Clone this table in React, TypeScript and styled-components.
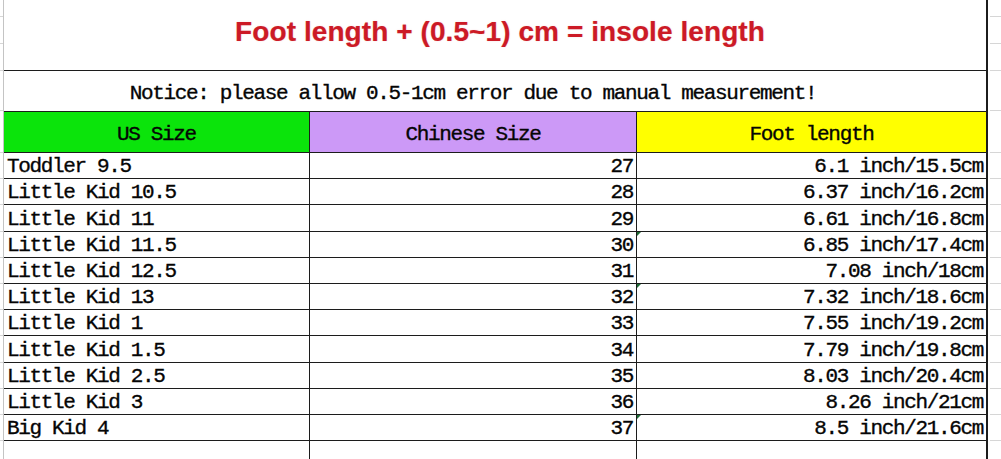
import React from "react";
import styled, { createGlobalStyle } from "styled-components";

const GlobalStyle = createGlobalStyle`
  html, body {
    margin: 0;
    padding: 0;
    background: #ffffff;
  }
  body {
    width: 1001px;
    height: 459px;
    overflow: hidden;
  }
`;

const ROW_H = 26.2;
const GUTTER_ROWS = [17, 27, 27, 40, 42, ...Array(11).fill(ROW_H), 30];

const rows = [
  { us: "Toddler 9.5", cn: "27", foot: "6.1 inch/15.5cm" },
  { us: "Little Kid 10.5", cn: "28", foot: "6.37 inch/16.2cm" },
  { us: "Little Kid 11", cn: "29", foot: "6.61 inch/16.8cm" },
  { us: "Little Kid 11.5", cn: "30", foot: "6.85 inch/17.4cm", mark: true },
  { us: "Little Kid 12.5", cn: "31", foot: "7.08 inch/18cm" },
  { us: "Little Kid 13", cn: "32", foot: "7.32 inch/18.6cm", mark: true },
  { us: "Little Kid 1", cn: "33", foot: "7.55 inch/19.2cm" },
  { us: "Little Kid 1.5", cn: "34", foot: "7.79 inch/19.8cm" },
  { us: "Little Kid 2.5", cn: "35", foot: "8.03 inch/20.4cm" },
  { us: "Little Kid 3", cn: "36", foot: "8.26 inch/21cm" },
  { us: "Big Kid 4", cn: "37", foot: "8.5 inch/21.6cm", mark: true },
];

const Sheet = styled.div`
  display: flex;
  width: 1001px;
  height: 459px;
  overflow: hidden;
  font-family: "Liberation Mono", "Courier New", monospace;
  font-size: 21px;
  letter-spacing: -1.35px;
  color: #050505;
  -webkit-text-stroke: 0.35px #050505;
`;

const Gutter = styled.div<{ $side: "left" | "right" }>`
  display: flex;
  flex-direction: column;
  width: ${(p) => (p.$side === "left" ? "3px" : "11px")};
  margin-left: ${(p) => (p.$side === "left" ? "0" : "2px")};
  border-right: ${(p) => (p.$side === "left" ? "1px solid #c4c4c4" : "none")};
  flex-shrink: 0;
`;

const GutterCell = styled.div<{ $h: number }>`
  height: ${(p) => p.$h}px;
  flex-shrink: 0;
  box-sizing: border-box;
  border-bottom: 1px solid #d6d6d6;
`;

const Table = styled.div`
  width: 984px;
  flex-shrink: 0;
  border-right: 2px solid #1c1c1c;
  box-sizing: border-box;
  display: flex;
  flex-direction: column;
  overflow: hidden;
`;

const Title = styled.div`
  height: 71px;
  flex-shrink: 0;
  box-sizing: border-box;
  border-bottom: 1px solid #1c1c1c;
  display: flex;
  align-items: center;
  justify-content: center;
  padding: 0 0 6px 10px;
  font-family: "Liberation Sans", Arial, sans-serif;
  font-weight: bold;
  font-size: 28px;
  letter-spacing: 0.08px;
  color: #cc1a26;
  -webkit-text-stroke: 0.2px #cc1a26;
  text-shadow: 0 0 2px rgba(204, 26, 38, 0.15);
`;

const Notice = styled.div`
  height: 41px;
  flex-shrink: 0;
  box-sizing: border-box;
  border-bottom: 1px solid #1c1c1c;
  display: flex;
  align-items: center;
  justify-content: center;
  padding: 5px 44px 0 0;
  white-space: pre;
`;

const Grid = styled.div`
  flex-shrink: 0;
  display: grid;
  grid-template-columns: 305px 327px 1fr;
  grid-template-rows: 41px repeat(11, ${ROW_H}px) 30px;
`;

const HeadCell = styled.div<{ $bg: string; $first?: boolean }>`
  box-sizing: border-box;
  background: ${(p) => p.$bg};
  border-left: ${(p) => (p.$first ? "none" : "1px solid #1c1c1c")};
  border-bottom: 1px solid #1c1c1c;
  display: flex;
  align-items: center;
  justify-content: center;
  padding-top: 4px;
  white-space: pre;
`;

const Cell = styled.div<{ $align: "left" | "right"; $first?: boolean }>`
  position: relative;
  box-sizing: border-box;
  border-left: ${(p) => (p.$first ? "none" : "1px solid #1c1c1c")};
  border-bottom: 1px solid #1c1c1c;
  display: flex;
  align-items: flex-end;
  justify-content: ${(p) => (p.$align === "left" ? "flex-start" : "flex-end")};
  padding: ${(p) => (p.$align === "left" ? "0 0 1px 3px" : "0 3px 1px 0")};
  line-height: 21px;
  white-space: pre;
`;

const EmptyCell = styled.div<{ $first?: boolean }>`
  border-left: ${(p) => (p.$first ? "none" : "1px solid #1c1c1c")};
`;

const ErrorMark = styled.span`
  position: absolute;
  top: 0;
  left: 0;
  width: 0;
  height: 0;
  border-top: 4px solid #1d6b34;
  border-right: 4px solid transparent;
`;

export default function App() {
  return (
    <>
      <GlobalStyle />
      <Sheet>
        <Gutter $side="left">
          {GUTTER_ROWS.map((h, i) => (
            <GutterCell key={i} $h={h} />
          ))}
        </Gutter>
        <Table>
          <Title>Foot length + (0.5~1) cm = insole length</Title>
          <Notice>Notice: please allow 0.5-1cm error due to manual measurement!</Notice>
          <Grid>
            <HeadCell $bg="#0be40b" $first>
              US Size
            </HeadCell>
            <HeadCell $bg="#cc99f7">Chinese Size</HeadCell>
            <HeadCell $bg="#ffff00">Foot length</HeadCell>
            {rows.map((r) => (
              <React.Fragment key={r.us}>
                <Cell $align="left" $first>
                  {r.us}
                </Cell>
                <Cell $align="right">{r.cn}</Cell>
                <Cell $align="right">
                  {r.mark && <ErrorMark />}
                  {r.foot}
                </Cell>
              </React.Fragment>
            ))}
            <EmptyCell $first />
            <EmptyCell />
            <EmptyCell />
          </Grid>
        </Table>
        <Gutter $side="right">
          {GUTTER_ROWS.map((h, i) => (
            <GutterCell key={i} $h={h} />
          ))}
        </Gutter>
      </Sheet>
    </>
  );
}
